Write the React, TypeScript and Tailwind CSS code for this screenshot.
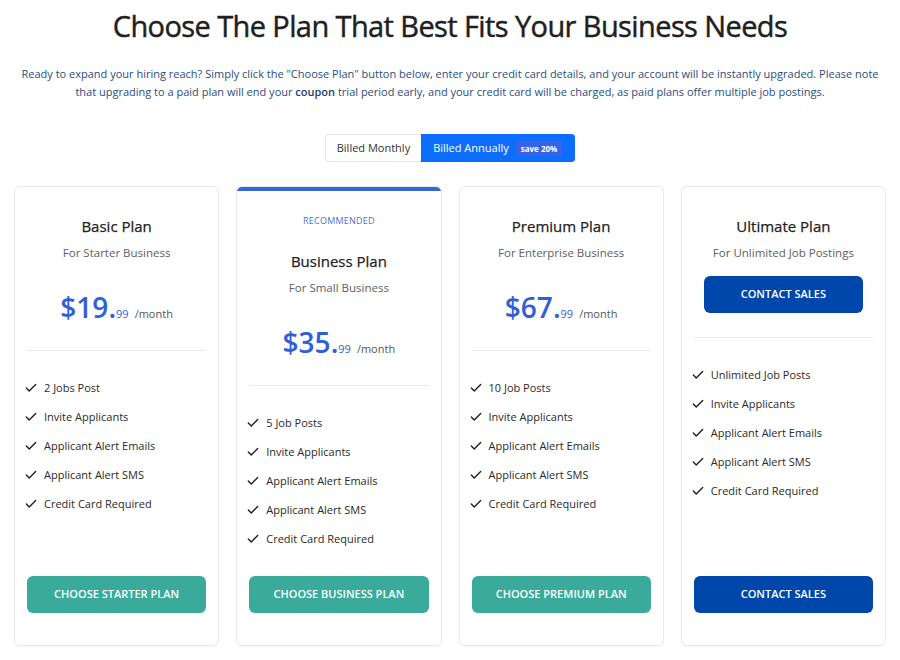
import { Check } from "lucide-react";

type Plan = {
  name: string;
  tagline: string;
  price?: string;
  features: string[];
  cta: string;
  recommended?: boolean;
  sales?: boolean;
};

const plans: Plan[] = [
  {
    name: "Basic Plan",
    tagline: "For Starter Business",
    price: "19",
    features: ["2 Jobs Post", "Invite Applicants", "Applicant Alert Emails", "Applicant Alert SMS", "Credit Card Required"],
    cta: "Choose Starter Plan",
  },
  {
    name: "Business Plan",
    tagline: "For Small Business",
    price: "35",
    features: ["5 Job Posts", "Invite Applicants", "Applicant Alert Emails", "Applicant Alert SMS", "Credit Card Required"],
    cta: "Choose Business Plan",
    recommended: true,
  },
  {
    name: "Premium Plan",
    tagline: "For Enterprise Business",
    price: "67",
    features: ["10 Job Posts", "Invite Applicants", "Applicant Alert Emails", "Applicant Alert SMS", "Credit Card Required"],
    cta: "Choose Premium Plan",
  },
  {
    name: "Ultimate Plan",
    tagline: "For Unlimited Job Postings",
    features: ["Unlimited Job Posts", "Invite Applicants", "Applicant Alert Emails", "Applicant Alert SMS", "Credit Card Required"],
    cta: "Contact Sales",
    sales: true,
  },
];

function PlanCard({ plan }: { plan: Plan }) {
  return (
    <div className="relative flex flex-col overflow-hidden rounded-md border border-[#e8eaee] bg-white px-3 pb-8 shadow-[0_1px_3px_rgba(0,0,0,0.04)]">
      {plan.recommended && <div className="absolute inset-x-0 top-0 h-1 bg-[#3566d6]" />}
      {plan.recommended ? (
        <div className="pt-[27px] text-center text-[9px] leading-[14px] tracking-wide text-[#4a72d0]">RECOMMENDED</div>
      ) : null}
      <h3
        className={`${plan.recommended ? "mt-[22px]" : "mt-7"} text-center text-[15px] leading-[22px] text-[#222] [-webkit-text-stroke:0.25px_#222]`}
      >
        {plan.name}
      </h3>
      <p className="mt-[8px] text-center text-[11.5px] leading-4 text-[#5e5e5e]">{plan.tagline}</p>

      {plan.price ? (
        <div className="mt-[28px] flex items-baseline justify-center border-b border-[#e9ebee] pb-[18px] leading-9 text-[#3060d8]">
          <span className="text-[28px] font-semibold">${plan.price}.</span>
          <span className="text-[11px]">99</span>
          <span className="ml-[6px] text-[11px] text-[#555]">/month</span>
        </div>
      ) : (
        <div className="border-b border-[#e9ebee] px-[10px] pb-6 pt-[15px]">
          <button className="h-[37px] w-full rounded-md bg-[#0047ab] text-[11px] font-semibold text-white">
            CONTACT SALES
          </button>
        </div>
      )}

      <div className="flex-1 pb-7">
        <ul className="-ml-[3px] mt-7 flex flex-col gap-[11px]">
          {plan.features.map((f) => (
            <li key={f} className="flex items-center gap-[6px] text-[11px] leading-[18px] text-[#2a2a2a]">
              <Check size={14} strokeWidth={2.4} className="text-[#1f1f1f]" />
              {f}
            </li>
          ))}
        </ul>
      </div>

      <button
        className={`h-[37px] w-full rounded-md text-[11px] font-semibold uppercase text-white ${
          plan.sales ? "bg-[#0047ab]" : "bg-[#3aaa9a]"
        }`}
      >
        {plan.cta}
      </button>
    </div>
  );
}

export default function App() {
  return (
    <div className="min-h-[660px] bg-white px-[14px] pb-[15px] font-['Open_Sans',sans-serif]">
      <h1 className="pt-[6px] text-center text-[29px] font-normal leading-[40px] tracking-[-0.6px] text-[#1f1f1f] [-webkit-text-stroke:0.45px_#1f1f1f]">
        Choose The Plan That Best Fits Your Business Needs
      </h1>
      <p className="mx-auto mt-[19px] max-w-[866px] text-center text-[11px] leading-[18px] text-[#2c4d7e]">
        Ready to expand your hiring reach? Simply click the "Choose Plan" button below, enter your credit card details,
        and your account will be instantly upgraded. Please note that upgrading to a paid plan will end your{" "}
        <b className="font-semibold text-[#1e3a6e]">coupon</b> trial period early, and your credit card will be charged,
        as paid plans offer multiple job postings.
      </p>

      <div className="mt-[33px] flex justify-center">
        <div className="flex h-7 overflow-hidden rounded-[3px] text-[11px]">
          <button className="rounded-l-[3px] border border-r-0 border-[#e4e6ea] bg-white px-[11px] text-[#333]">
            Billed Monthly
          </button>
          <button className="flex items-center gap-[7px] rounded-r-[3px] bg-[#0d6efd] pl-[12px] pr-[13px] text-white">
            Billed Annually
            <span className="rounded-[2px] bg-[#3a62e6] px-[5px] py-[2px] text-[8px] font-bold leading-[11px]">save 20%</span>
          </button>
        </div>
      </div>

      <div className="mt-6 grid grid-cols-4 gap-[17px]">
        {plans.map((p) => (
          <PlanCard key={p.name} plan={p} />
        ))}
      </div>
    </div>
  );
}
